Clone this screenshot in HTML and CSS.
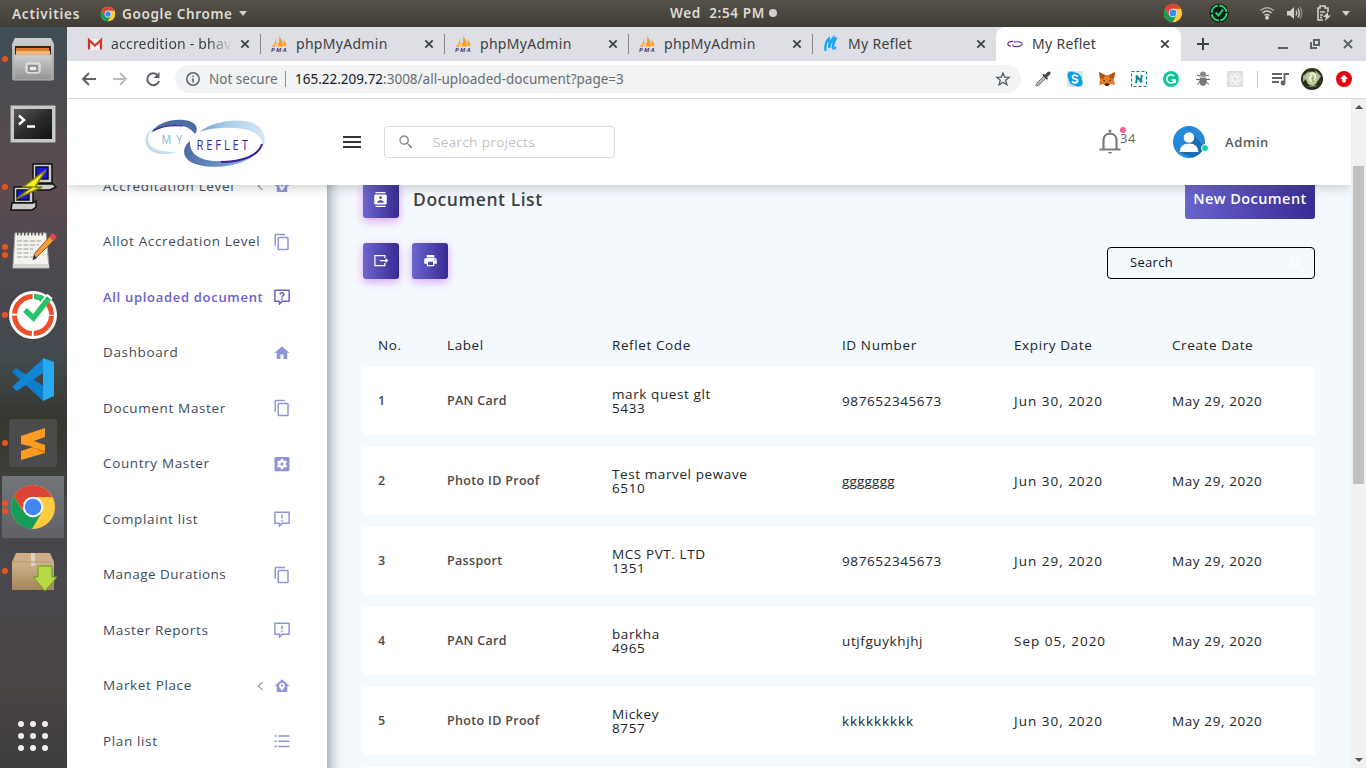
FILE: index.html
```html
<!DOCTYPE html>
<html lang="en">
<head>
<meta charset="utf-8">
<title>My Reflet</title>
<link rel="stylesheet" href="styles.css">
</head>
<body>
<svg class="defs" aria-hidden="true">
  <defs>
    <linearGradient id="lg1" x1="0" y1="0" x2="1" y2="0"><stop offset="0" stop-color="#4c6ba6"/><stop offset=".6" stop-color="#7a9fd0"/><stop offset=".8" stop-color="#8fb2dc"/><stop offset="1" stop-color="#33208f"/></linearGradient>
    <linearGradient id="lg2" x1="0" y1="0" x2="1" y2="0"><stop offset="0" stop-color="#6f9bcd"/><stop offset=".4" stop-color="#a9cbe9"/><stop offset="1" stop-color="#d5e6f5"/></linearGradient>
    <linearGradient id="metal" x1="0" y1="0" x2="0" y2="1"><stop offset="0" stop-color="#cfcfcf"/><stop offset="1" stop-color="#929292"/></linearGradient>
    <linearGradient id="dark" x1="0" y1="0" x2="1" y2="1"><stop offset="0" stop-color="#5a5a5a"/><stop offset=".5" stop-color="#2c2c2c"/><stop offset="1" stop-color="#111"/></linearGradient>
    <linearGradient id="box" x1="0" y1="0" x2="0" y2="1"><stop offset="0" stop-color="#d2b48c"/><stop offset="1" stop-color="#a5855b"/></linearGradient>
  </defs>
  <symbol id="chrome" viewBox="0 0 48 48">
    <circle cx="24" cy="24" r="22" fill="#fdcb3d"/>
    <path d="M24 24 L13 27 L5 13 A22 22 0 0 0 23 46 L33 29Z" fill="#129d58"/>
    <path d="M4.9 13 A22 22 0 0 1 43.5 14 H24 L14 28Z" fill="#dc4437"/>
    <circle cx="24" cy="24" r="10.3" fill="#f4f4f4"/><circle cx="24" cy="24" r="8.2" fill="#4285f4"/>
  </symbol>
  <symbol id="x" viewBox="0 0 10 10"><path d="M1.3 1.3 8.7 8.7M8.7 1.3 1.3 8.7" stroke="currentColor" stroke-width="1.8" fill="none"/></symbol>
  <symbol id="pma" viewBox="0 0 16 16">
    <path d="M1 11 Q4 8 4.500 3 L5.500 11ZM6 10.500 Q9 6 8 0 Q12 5 12 10.500ZM12.500 10 V3 Q15 7 15.500 10Z" fill="#f89c1c"/>
    <path d="M3 11 Q6 7 7 1 V11Z" fill="#fcc98a"/>
    <text x="0" y="16" textLength="15.500" class="pma-t">PMA</text>
  </symbol>
  <symbol id="copy" viewBox="0 0 24 24"><path fill="currentColor" d="M19,21H8V7H19M19,5H8A2,2 0 0,0 6,7V21A2,2 0 0,0 8,23H19A2,2 0 0,0 21,21V7A2,2 0 0,0 19,5M16,1H4A2,2 0 0,0 2,3V17H4V3H16V1Z"/></symbol>
  <symbol id="house" viewBox="0 0 24 24"><path fill="currentColor" d="M10,20V14H14V20H19V12H22L12,3L2,12H5V20H10Z"/></symbol>
  <symbol id="pin" viewBox="0 0 24 24"><path fill="currentColor" fill-rule="evenodd" d="M12,3L2,12H5V20H19V12H22L12,3M12,7.700C14.100,7.700 15.800,9.400 15.800,11.500C15.800,14.500 12,18 12,18C12,18 8.200,14.500 8.200,11.500C8.200,9.400 9.900,7.700 12,7.700M12,10A1.500,1.500 0 0,0 10.500,11.500A1.500,1.500 0 0,0 12,13A1.500,1.500 0 0,0 13.500,11.500A1.500,1.500 0 0,0 12,10Z"/></symbol>
  <symbol id="ask" viewBox="0 0 24 24"><g fill="none" stroke="currentColor" stroke-width="2"><path d="M2.500 3H21.500V17.500H12.500L8.500 21.500V17.500H2.500Z" stroke-linejoin="round"/><path d="M9.500 8.500C9.500 5.500 14.500 5.500 14.500 8.500C14.500 10.300 12 10.200 12 12.500M12 13.700V15.500"/></g></symbol>
  <symbol id="alert" viewBox="0 0 24 24"><g fill="none" stroke="currentColor" stroke-width="2"><path d="M2.500 3H21.500V17.500H12.500L8.500 21.500V17.500H2.500Z" stroke-linejoin="round"/><path d="M12 6V11M12 13V15"/></g></symbol>
  <symbol id="gear" viewBox="0 0 24 24"><rect x="2" y="2.500" width="20" height="19" rx="2" fill="currentColor"/><circle cx="12" cy="12" r="3.700" fill="none" stroke="#fff" stroke-width="3.200"/><path d="M12 5V7.500M12 16.500V19M6 8.500 8 9.700M16 14.300 18 15.500M18 8.500 16 9.700M8 14.300 6 15.500" stroke="#fff" stroke-width="3"/></symbol>
  <symbol id="list" viewBox="0 0 24 24"><path d="M7 5.200H22M7 12.200H22M7 19.200H22M2 5.200H5M2 12.200H5M2 19.200H5" stroke="currentColor" stroke-width="2"/></symbol>
  <symbol id="magnify" viewBox="0 0 24 24"><path fill="currentColor" d="M9.500,3A6.500,6.500 0 0,1 16,9.500C16,11.110 15.410,12.590 14.440,13.730L14.710,14H15.500L20.500,19L19,20.500L14,15.500V14.710L13.730,14.440C12.590,15.410 11.110,16 9.500,16A6.500,6.500 0 0,1 3,9.500A6.500,6.500 0 0,1 9.500,3M9.500,5C7,5 5,7 5,9.500C5,12 7,14 9.500,14C12,14 14,12 14,9.500C14,7 12,5 9.500,5Z"/></symbol>
</svg>

<div class="desktop">
  <div class="topbar">
    <div class="tb-left"><span class="act">Activities</span><svg class="i16"><use href="#chrome"/></svg><span class="app">Google Chrome</span><i class="tri"></i></div>
    <div class="clock"><span>Wed&nbsp; 2:54 PM</span><i class="dot"></i></div>
    <div class="tray">
      <svg width="20" height="20"><use href="#chrome"/></svg>
      <svg class="t2" width="20" height="20" viewBox="0 0 20 20"><circle cx="10" cy="10" r="9.500" fill="#101614"/><circle cx="10" cy="10" r="7.500" fill="none" stroke="#16e06e" stroke-width="2" stroke-dasharray="10.300 1.500"/><path d="M6.500 9.500 9.500 12.500 14 6.500" stroke="#16e06e" stroke-width="2" fill="none"/></svg>
      <svg class="t3" width="14" height="14" viewBox="0 0 14 14" fill="none" stroke="#d3d1cd" stroke-width="1.500"><path d="M.5 4.500Q7-1 13.500 4.500" opacity=".7"/><path d="M2.500 7Q7 3 11.500 7"/><path d="M4.500 9.300Q7 7.500 9.500 9.300"/><circle cx="7" cy="11.800" r="1.200" fill="#d3d1cd"/></svg>
      <svg class="t4" width="16" height="14" viewBox="0 0 16 14" fill="none" stroke="#d3d1cd" stroke-width="1.400"><path d="M0 5H3L7 1V13L3 9.500H0Z" fill="#d3d1cd" stroke="none"/><path d="M9 4.500Q10.500 7 9 9.500M11 2.500Q13.500 7 11 11.500"/><path d="M13 1Q16.500 7 13 13" opacity=".5"/></svg>
      <svg class="t5" width="14" height="16" viewBox="0 0 14 16"><path d="M6 15H1V3H3V1H8V3H11V7M3 7H8M3 10H6M3 12.500H5" fill="none" stroke="#d3d1cd" stroke-width="1.600"/><path d="M11 7 6 12H9L8 16 14 10.500H11Z" fill="#d3d1cd"/></svg>
      <i class="tri"></i>
    </div>
  </div>

  <nav class="dock">
    <div class="app-cell run"><svg viewBox="0 1 48 48"><path d="M6 4H42L45 10V46H3V10Z" fill="url(#metal)"/><rect x="6" y="12" width="36" height="10" fill="#3b2414"/><path d="M7 14H40V17H7Z" fill="#e07b32"/><path d="M7 17H41V22H7Z" fill="#f4b67a"/><rect x="5" y="21" width="38" height="25" fill="url(#metal)" stroke="#b9b9b9"/><rect x="17" y="29" width="14" height="10" rx="2" fill="#c9c9c9" stroke="#eee"/><rect x="20" y="32" width="8" height="5" fill="#eee" stroke="#555"/></svg></div>
    <div class="app-cell"><svg viewBox="0 -.5 48 48"><rect x="1.500" y="6" width="45" height="37" rx="1" fill="#c7c9c7" stroke="#888"/><rect x="5" y="9.500" width="38" height="30" fill="url(#dark)"/><path d="M10 16 15 20.500 10 25M18 27H26" stroke="#fff" stroke-width="2.500" fill="none"/></svg></div>
    <div class="app-cell run"><svg viewBox="0 0 48 48" stroke="#111" stroke-width="1.500"><path d="M24 1H43V20H24Z" fill="#cfcfcf"/><path d="M27 4H39V16H27Z" fill="#1616e8"/><path d="M21 21H44L47 24 41 27H20Z" fill="#ccc"/><path d="M5 24H24V40H5Z" fill="#cfcfcf"/><path d="M8 27H20V37H8Z" fill="#1616e8"/><path d="M3 40H24L27 38V44L23 47H2Z" fill="#ccc"/><path d="M37 7 14 24H23L7 36 33 24H26Z" fill="#f5ef1d" stroke="#7c7a10"/></svg></div>
    <div class="app-cell run2"><svg viewBox="0 1 48 48"><path d="M6 7H37L40 42H4Z" fill="#f3f2ef" stroke="#aaa"/><path d="M4 38H40V42H4Z" fill="#d6d5d2"/><path d="M8 7H36" stroke="#555" stroke-width="5" stroke-dasharray="1.500 2"/><path d="M8 15H32M8 19H30M8 23H24M8 27H22M8 31H27" stroke="#9c9c9c" stroke-dasharray="5 1.500"/><path d="M24 34 26 27 42 9 46 13 30 29Z" fill="#f2a13c" stroke="#94591b"/><path d="M40 11 44 7 48 11 44 15Z" fill="#dc4b4e"/><path d="M24 34 25 29 28 32Z" fill="#333"/></svg></div>
    <div class="app-cell run"><svg viewBox="0 0 48 48"><circle cx="24" cy="24" r="24" fill="#fff"/><circle cx="24" cy="24" r="18.500" fill="none" stroke="#ee4f2b" stroke-width="5" stroke-dasharray="27.060 2" stroke-dashoffset="-1"/><path d="M25 3Q34 3 40 9L34 16 30 9 25 8Z" fill="#27c26c"/><path d="M33 14 41 5" stroke="#fff" stroke-width="7"/><path d="M16 19 24.500 27 40 7" stroke="#27c26c" stroke-width="5.500" fill="none"/></svg></div>
    <div class="app-cell"><svg viewBox="0 0 48 48"><path d="M3 17 7 13 45 38 34 46Z" fill="#0a7fc9"/><path d="M3 32 34 4V18L8 36Z" fill="#1086d4"/><path d="M34 3 45 7V41L34 46Z" fill="#29a9f2"/></svg></div>
    <div class="app-cell run"><svg viewBox="0 0 48 48"><rect width="48" height="48" rx="3" fill="#4b4b4b"/><path d="M12 17 36 9V18L25 22 36 26V34L12 41V32L24 28 12 25Z" fill="#ff9a22"/><path d="M23 28 36 32 35 34Z" fill="#d97706"/></svg></div>
    <div class="app-cell run2 focused"><svg><use href="#chrome"/></svg></div>
    <div class="app-cell run"><svg viewBox="0 -1 48 48"><path d="M7 5H41L45 14H3Z" fill="#cfae87"/><path d="M3 13.500H45V42H3Z" fill="url(#box)"/><path d="M22 5H26V18H22Z" fill="#ddd1c0"/><path d="M3 14H45" stroke="#b69468"/><path d="M29 18H43V29H48L36 43 24 29H29Z" fill="#b5d943" stroke="#6d932a"/></svg></div>
    <div class="grid-btn"><i></i><i></i><i></i><i></i><i></i><i></i><i></i><i></i><i></i></div>
  </nav>

  <div class="browser">
    <div class="tabs">
      <div class="tab"><svg class="i16" viewBox="0 0 16 16"><rect x="1" y="3" width="14" height="11" fill="#f1f1f1"/><path d="M2 13.500V4L8 9.500 14 4V13.500" fill="none" stroke="#d93025" stroke-width="2.200"/></svg><span class="fade">accredition - bhav</span><svg class="x"><use href="#x"/></svg></div>
      <div class="tab"><svg class="i16"><use href="#pma"/></svg><span>phpMyAdmin</span><svg class="x"><use href="#x"/></svg></div>
      <div class="tab"><svg class="i16"><use href="#pma"/></svg><span>phpMyAdmin</span><svg class="x"><use href="#x"/></svg></div>
      <div class="tab"><svg class="i16"><use href="#pma"/></svg><span>phpMyAdmin</span><svg class="x"><use href="#x"/></svg></div>
      <div class="tab last"><svg class="i16" viewBox="0 0 16 16"><path d="M2.500 15C2 10 3 5 6 2.500Q7 7 6 12 8 4 10.500 1.500 11 6 9.500 12 11 5 13.500 1.500M9.500 12Q11 13.500 13 11" fill="none" stroke="#18a8f5" stroke-width="2.300"/></svg><span>My Reflet</span><svg class="x"><use href="#x"/></svg></div>
      <div class="tab active"><svg class="i16" viewBox="0 0 16 16"><path d="M6 5.500Q1 5 .8 8 1 10 4 10M6.500 6Q15 5 15.300 8 14 11 7 10.500 5.500 10 6 8.500" fill="none" stroke="#74309a" stroke-width="1.200"/></svg><span>My Reflet</span><svg class="x"><use href="#x"/></svg></div>
      <svg class="plus" width="12" height="12" viewBox="0 0 12 12"><path d="M6 0V12M0 6H12" stroke="#3c4043" stroke-width="2"/></svg>
      <svg class="win" width="76" height="12" viewBox="0 0 76 12" fill="none" stroke="#5f6368" stroke-width="2"><path d="M0 10H10"/><path d="M36 2H41V7H36Z"/><path d="M33 4V10H39"/><path d="M66 2 74 10M74 2 66 10"/></svg>
    </div>
    <div class="toolbar">
      <svg class="nav" width="80" height="16" viewBox="0 0 80 16" fill="none" stroke="#5f6368" stroke-width="2"><path d="M15 8H2M8 2 2 8 8 14"/><path d="M32 8H45M39 2 45 8 39 14" stroke="#b9bbbe"/><path d="M77 4.500A6 6 0 1 0 78 10"/><path d="M78.500 1V7H72.500Z" fill="#5f6368" stroke="none"/></svg>
      <div class="omni">
        <svg width="14" height="14" viewBox="0 0 14 14" fill="none" stroke="#5f6368" stroke-width="1.500"><circle cx="7" cy="7" r="6.200"/><path d="M7 6.200V10.500M7 3.500V5"/></svg>
        <span class="ns">Not secure</span><i class="bar"></i><span class="url"><b>165.22.209.72</b>:3008/all-uploaded-document?page=3</span>
        <svg class="star" width="14" height="14" viewBox="0 0 14 14"><path d="M7 1 8.700 5.100 13.200 5.400 9.700 8.200 10.900 12.700 7 10.200 3.100 12.700 4.300 8.200 .8 5.400 5.300 5.100Z" fill="none" stroke="#55595e" stroke-width="1.300"/></svg>
      </div>
      <div class="ext">
        <svg viewBox="0 0 16 16"><path d="M1 15 2 12 9 5 11 7 4 14Z" fill="#bbb" stroke="#777"/><path d="M7 3.500 9 3 10 4 12.500 1Q16-.5 15.500 3L12 6 13 7 12 9Z" fill="#444"/></svg>
        <svg viewBox="0 0 16 16"><rect width="16" height="16" fill="#dfe4e8"/><circle cx="8" cy="8" r="6.500" fill="#0b9ee8"/><circle cx="4.500" cy="4.500" r="4" fill="#0b9ee8"/><circle cx="11.500" cy="11.500" r="4" fill="#0b9ee8"/><path d="M11 5.500Q8 3 5.700 5 5 7.500 8 8 11.500 8.500 10.500 10.500 8 13 5 10.500" fill="none" stroke="#fff" stroke-width="1.800"/></svg>
        <svg viewBox="0 0 16 16"><path d="M0 1 6 4H10L16 1 15 9 16 14 11 13 9 15H7L5 13 0 14 1 9Z" fill="#e77d25"/><path d="M0 1 6 4 5 8 1 7ZM16 1 10 4 11 8 15 7Z" fill="#af5416"/><path d="M5 13 8 12 11 13 9 15H7Z" fill="#362b29"/><path d="M4 9 6 10M12 9 10 10" stroke="#333"/></svg>
        <svg viewBox="0 0 16 16"><rect x=".5" y=".5" width="15" height="15" fill="#f4fafa" stroke="#167c8e" stroke-dasharray="3 2"/><path d="M5 12Q6.500 8 5.500 4.500L10.500 11.500Q9.500 8 11 4" fill="none" stroke="#13808e" stroke-width="2"/></svg>
        <svg viewBox="0 0 16 16"><circle cx="8" cy="8" r="8" fill="#15c39a"/><path d="M11 5A4.200 4.200 0 1 0 12 9H8.500M12 9V12" fill="none" stroke="#fff" stroke-width="1.500"/></svg>
        <svg viewBox="0 0 16 16"><path d="M5 5 2 4M11 5 14 4M5 8.500H1M11 8.500H15M5 11 2 13.500M11 11 14 13.500" stroke="#666"/><ellipse cx="8" cy="10" rx="3.800" ry="5" fill="#777"/><circle cx="8" cy="3.500" r="3" fill="#888"/><path d="M4 6.200H12" stroke="#ddd"/></svg>
        <svg viewBox="0 0 16 16"><rect width="16" height="16" fill="#dedede"/><g fill="none" stroke="#f8f8f8"><ellipse cx="8" cy="8" rx="6.500" ry="2.500"/><ellipse cx="8" cy="8" rx="6.500" ry="2.500" transform="rotate(60 8 8)"/><ellipse cx="8" cy="8" rx="6.500" ry="2.500" transform="rotate(120 8 8)"/></g></svg>
      </div>
      <i class="bar lite"></i>
      <svg class="queue" width="17" height="14" viewBox="0 0 17 14"><path d="M0 2H10M0 6H10M0 10H7M12.500 11V2H17" stroke="#5f6368" stroke-width="1.800" fill="none"/><circle cx="11" cy="11" r="2.400" fill="#5f6368"/></svg>
      <svg class="ava" width="22" height="22" viewBox="0 0 22 22"><circle cx="11" cy="11" r="11" fill="#26331c"/><path d="M2 8 8 3 7 9 2 14M14 2 20 8 17 13M6 19 12 17 17 18" fill="#a9b598"/><ellipse cx="11" cy="10.500" rx="6" ry="7" fill="#b7cd98"/><path d="M9 6Q15 4 14 10 12 14 9 12 8 9 11 8" fill="none" stroke="#e9f2d9" stroke-width="2"/><path d="M12 9V14" stroke="#65864b"/></svg>
      <svg class="upd" width="16" height="16" viewBox="0 0 16 16"><circle cx="8" cy="8" r="8" fill="#e60012"/><path d="M8 3.500 12 8H9.700V11.500H6.300V8H4Z" fill="#fff"/></svg>
    </div>

    <div class="viewport">
      <div class="page">
        <header class="header">
          <svg class="logo" width="120" height="48" viewBox="0 0 120 48">
            <path d="M8 8C-4 15-2 34 18 34Q28 34 31 32 10 32 5 25 0 17 8 8Z" fill="#c3ddf1"/>
            <path d="M6 13C14-2 46-4 51 6Q53 10 50 14 44 5 29 5 14 6 6 13Z" fill="#4d6ca6"/>
            <path d="M8 11Q20 4 38 6" stroke="#35219a" stroke-width="1.200" fill="none"/>
            <path d="M55 12C70-1 106-4 116 9 121 16 120 22 118 28 118 14 106 9 90 8Q68 7 55 12Z" fill="url(#lg2)"/>
            <path d="M45 21C36 28 36 41 54 45 78 51 114 42 118 22 113 35 100 40 80 41 60 42 44 37 45 21Z" fill="url(#lg1)"/>
            <path d="M76 42C98 42 114 35 117 24" stroke="#35219a" stroke-width="2" fill="none"/>
            <text x="20.600" y="24" textLength="26" transform="scale(.8 1)" class="logo-my">MY</text>
            <text x="64.500" y="30" textLength="64" transform="scale(.8 1)" class="logo-re">REFLET</text>
          </svg>
          <div class="burger"><i></i><i></i><i></i></div>
          <div class="hsearch"><svg width="18" height="18"><use href="#magnify"/></svg><span>Search projects</span></div>
          <div class="bell"><svg width="22" height="26" viewBox="0 0 22 26"><path d="M4.500 21V12C4.500 3.500 17.500 3.500 17.500 12V21" fill="none" stroke="#7b7b7b" stroke-width="2.200"/><path d="M.5 21.500H21.500" stroke="#7b7b7b" stroke-width="2"/><path d="M8.500 24H13.500L12 25.500H10Z" fill="#7b7b7b"/><circle cx="11" cy="3" r="1.500" fill="#7b7b7b"/></svg><span>34</span><i></i></div>
          <div class="user"><svg width="32" height="32" viewBox="0 0 32 32"><circle cx="16" cy="16" r="16" fill="#2489d7"/><path d="M20 8 31 20Q29 28 20 31.500L7 26Z" fill="#1c6bb0"/><circle cx="16" cy="11.500" r="5.300" fill="#fff"/><path d="M6.500 26Q7 17.500 16 17.500 25 17.500 25.500 26Z" fill="#fff"/></svg><i></i></div>
          <span class="admin">Admin</span>
        </header>
        <div class="body">
          <aside class="side">
            <div class="item"><span>Accreditation Level</span><i class="chev"></i><svg><use href="#pin"/></svg></div>
            <div class="item"><span>Allot Accredation Level</span><svg><use href="#copy"/></svg></div>
            <div class="item on"><span>All uploaded document</span><svg><use href="#ask"/></svg></div>
            <div class="item"><span>Dashboard</span><svg><use href="#house"/></svg></div>
            <div class="item"><span>Document Master</span><svg><use href="#copy"/></svg></div>
            <div class="item"><span>Country Master</span><svg><use href="#gear"/></svg></div>
            <div class="item"><span>Complaint list</span><svg><use href="#alert"/></svg></div>
            <div class="item tight"><span>Manage Durations</span><svg><use href="#copy"/></svg></div>
            <div class="item"><span>Master Reports</span><svg><use href="#alert"/></svg></div>
            <div class="item"><span>Market Place</span><i class="chev"></i><svg><use href="#pin"/></svg></div>
            <div class="item"><span>Plan list</span><svg><use href="#list"/></svg></div>
          </aside>
          <main class="main">
            <div class="head">
              <div class="sq"><svg viewBox="0 0 24 24"><path fill="#fff" fill-rule="evenodd" d="M20,0H4V2H20V0M4,24H20V22H4V24M20,4H4A2,2 0 0,0 2,6V18A2,2 0 0,0 4,20H20A2,2 0 0,0 22,18V6A2,2 0 0,0 20,4M12,6.750A2.250,2.250 0 0,1 14.250,9A2.250,2.250 0 0,1 12,11.250A2.250,2.250 0 0,1 9.750,9A2.250,2.250 0 0,1 12,6.750M17,17H7V15.500C7,13.830 10.330,13 12,13C13.670,13 17,13.830 17,15.500V17Z"/></svg></div>
              <h1>Document List</h1>
              <button class="new">New Document</button>
            </div>
            <div class="tools">
              <div class="sq"><svg viewBox="0 0 24 24"><path fill="none" stroke="#fff" stroke-width="2" d="M19 8V4H3V20H19V16M11 12H23M20 9 23 12 20 15"/></svg></div>
              <div class="sq pr"><svg viewBox="0 0 24 24"><path fill="#fff" fill-rule="evenodd" d="M18,3H6V7H18M19,12A1,1 0 0,1 18,11A1,1 0 0,1 19,10A1,1 0 0,1 20,11A1,1 0 0,1 19,12M16,19H8V14H16M19,8H5A3,3 0 0,0 2,11V17H6V21H18V17H22V11A3,3 0 0,0 19,8Z"/></svg></div>
              <div class="search"><span>Search</span><svg width="15" height="15"><use href="#magnify"/></svg></div>
            </div>
            <div class="row th"><span>No.</span><span>Label</span><span>Reflet Code</span><span>ID Number</span><span>Expiry Date</span><span>Create Date</span></div>
            <div class="row"><b>1</b><b>PAN Card</b><span class="code">mark quest glt<br>5433</span><span>987652345673</span><span class="exp">Jun 30, 2020</span><span>May 29, 2020</span></div>
            <div class="row"><b>2</b><b>Photo ID Proof</b><span class="code">Test marvel pewave<br>6510</span><span class="ggg">ggggggg</span><span class="exp">Jun 30, 2020</span><span>May 29, 2020</span></div>
            <div class="row"><b>3</b><b>Passport</b><span class="code">MCS PVT. LTD<br>1351</span><span>987652345673</span><span class="exp">Jun 29, 2020</span><span>May 29, 2020</span></div>
            <div class="row"><b>4</b><b>PAN Card</b><span class="code">barkha<br>4965</span><span>utjfguykhjhj</span><span class="exp">Sep 05, 2020</span><span>May 29, 2020</span></div>
            <div class="row"><b>5</b><b>Photo ID Proof</b><span class="code">Mickey<br>8757</span><span class="kkk">kkkkkkkkk</span><span class="exp">Jun 30, 2020</span><span>May 29, 2020</span></div>
            <div class="row"></div>
          </main>
        </div>
      </div>
      <div class="scroll"><i class="up"></i><div class="thumb"></div><i class="down"></i></div>
    </div>
  </div>
</div>
</body>
</html>
```
FILE: styles.css
```css
* { box-sizing: border-box; }
body { margin: 0; width: 1366px; height: 768px; overflow: hidden; font-family: "Open Sans", "Noto Sans", sans-serif; }
svg { display: block; flex: none; overflow: visible; }
.defs { position: absolute; width: 0; height: 0; }
.i16 { width: 16px; height: 16px; }
.desktop { display: grid; grid-template: 27px 741px / 67px 1299px; }

.topbar { grid-column: 1 / 3; display: grid; grid-template-columns: 670px 1fr auto; align-items: center; background: linear-gradient(#56524a, #403d38); color: #dfdbd2; font: 600 13.500px/26px "Noto Sans", sans-serif; letter-spacing: .65px; }
.tb-left { display: flex; align-items: center; padding-left: 12px; }
.act { width: 88px; white-space: nowrap; letter-spacing: .8px; }
.app { margin: 0 6px 0 6px; }
.tri { border: 4.500px solid transparent; border-top: 5px solid #d3d1cd; border-bottom: 0; }
.clock { display: flex; align-items: center; gap: 4px; margin-top: -1px; }
.dot { width: 8px; height: 8px; border-radius: 50%; background: #d3d1cd; }
.tray { display: flex; align-items: center; padding-right: 16px; margin-top: -1px; }
.t2 { margin-left: 26px; } .t3 { margin-left: 31px; } .t4 { margin-left: 13px; } .t5 { margin: 0 11px 0 14px; }

.dock { display: flex; flex-direction: column; align-items: flex-end; background: linear-gradient(#3f4d55 0, #4e4c50 10%, #5b4a51 22%, #4a4950 34%, #424a4e 45%, #36372f 53%, #393a33 57%, #45474a 66%, #48484d 75%, #4b4444 88%, #3e3e3d 100%); }
.app-cell { width: 67px; height: 64px; display: grid; place-items: center; position: relative; flex: none; padding-right: 1px; }
.app-cell svg { width: 48px; height: 48px; }
.focused { background: linear-gradient(#72767a, #606166) no-repeat 2px 1px / 62px 62px; }
.run::before, .run2::before { content: ""; position: absolute; left: 2px; top: 29px; width: 6px; height: 6px; border-radius: 50%; background: #e95420; }
.run2::before { top: 25px; box-shadow: 0 8px #e95420; }
.grid-btn { display: grid; grid-template-columns: repeat(3, 6px); gap: 6px; width: 30px; margin: 118px 19px 0 0; }
.grid-btn i { height: 6px; border-radius: 50%; background: #eee; }

.browser { display: flex; flex-direction: column; background: #fff; }
.tabs { height: 34px; display: flex; align-items: center; padding-left: 10px; background: #dedfe5; flex: none; }
.tab { width: 184px; height: 34px; display: flex; align-items: center; padding: 0 10px; background: linear-gradient(#85878c, #85878c) no-repeat right 7px / 1px 20px; color: #3c4043; }
.tab.last { background: none; }
.tab span { margin-left: 9px; width: 121px; font: 14px/20px "Noto Sans", sans-serif; letter-spacing: .3px; white-space: nowrap; overflow: hidden; }
.tab .fade { margin-left: 8px; width: 122px; letter-spacing: .2px; -webkit-mask-image: linear-gradient(90deg, #000 80%, transparent 99%); mask-image: linear-gradient(90deg, #000 80%, transparent 99%); }
.tab .x { width: 10px; height: 10px; margin-left: 7px; }
.tab.active { width: 185px; margin-left: -1px; padding-left: 11px; background: #fff; border-radius: 9px 9px 0 0; }
.plus { margin-left: 16px; }
.win { margin-left: 69px; }

.toolbar { height: 38px; display: flex; align-items: center; padding-bottom: 1px; border-bottom: 1px solid #d8d8de; flex: none; }
.nav { margin-left: 14px; }
.omni { width: 846px; height: 28px; margin-left: 14px; border-radius: 14px; background: #f1f3f4; display: flex; align-items: center; padding: 0 11px; font: 13.500px/20px "Noto Sans", sans-serif; color: #6a6e73; }
.ns { margin-left: 9px; width: 69px; white-space: nowrap; }
.bar { width: 1px; height: 16px; background: #8b8e92; margin: 0 9px 0 7px; }
.url b { font-weight: 400; color: #202124; }
.star { margin-left: auto; }
.ext { display: flex; gap: 16px; margin-left: 14px; }
.ext svg { width: 16px; height: 16px; }
.bar.lite { background: #c9cacd; margin: 0 0 0 14px; }
.queue { margin-left: 14px; }
.ava { margin-left: 12px; }
.upd { margin-left: 13px; }

.viewport { display: flex; height: 669px; }
.page { width: 1284px; overflow: hidden; background: #f4f9fe; }
.scroll { width: 15px; background: #f1f1f1; display: flex; flex-direction: column; align-items: center; }
.up, .down { border: 4px solid transparent; flex: none; }
.up { border-top: 0; border-bottom: 4px solid #505050; margin-top: 6px; }
.thumb { width: 11px; height: 318px; background: #c1c1c1; margin-top: 57px; }
.down { border-bottom: 0; border-top: 4px solid #505050; margin-top: auto; margin-bottom: 6px; }

.header { position: relative; z-index: 3; height: 86px; display: flex; align-items: center; background: #fff; box-shadow: 0 1px 12px rgba(60, 70, 70, .32); }
.logo { margin: 3px 0 0 78px; }
.burger { margin-left: 78px; width: 18px; display: grid; gap: 3px; }
.burger i { height: 2px; background: #333; }
.hsearch { margin-left: 23px; width: 231px; height: 32px; border: 1px solid #d8d9dd; border-radius: 4px; display: flex; align-items: center; padding-left: 12px; color: #8d8d8d; }
.hsearch span { margin-left: 18px; font-size: 13.500px; font-weight: 300; letter-spacing: .55px; color: #a0a3a8; }
.bell { position: relative; display: flex; margin: -2px 0 0 484px; width: 73px; color: #666; }
.bell span { font: 13px/20px "Open Sans", sans-serif; letter-spacing: .5px; margin-left: -1px; }
.bell i { position: absolute; left: 21px; top: -1px; width: 6px; height: 6px; border-radius: 50%; background: #fe5c96; }
.user { position: relative; margin-left: 1px; }
.user i { position: absolute; left: 28px; top: 18px; width: 8px; height: 8px; border-radius: 50%; background: #0ccfaa; border: 1px solid #fff; }
.admin { margin-left: 20px; font-size: 13px; font-weight: 600; letter-spacing: .6px; color: #5a5a5a; }

.body { display: flex; margin-top: -27px; }
.side { position: relative; z-index: 1; width: 260px; height: 640px; background: #fff; box-shadow: 2px 0 13px rgba(50, 60, 70, .55); }
.item { height: 55.500px; display: flex; align-items: center; padding: 0 36px; color: #3e4b5b; font-size: 13.500px; letter-spacing: .64px; white-space: nowrap; }
.item.tight { letter-spacing: .45px; }
.item svg { width: 18px; height: 18px; margin-left: auto; color: #8e94d4; }
.item.on { color: #6a61cd; font-size: 13px; font-weight: 600; letter-spacing: .7px; }
.item.on svg { color: #6a61cd; }
.item svg, .item i { position: relative; top: .5px; }
.chev { width: 6px; height: 6px; border-left: 1.500px solid #888; border-bottom: 1.500px solid #888; transform: rotate(45deg); margin-left: auto; margin-right: 8px; }
.item .chev + svg { margin-left: 0; }

.main { padding: 24px 36px 0; width: 1024px; }
.head, .tools { display: flex; align-items: center; }
.head { height: 36px; }
.sq { width: 36px; height: 36px; border-radius: 3px; background: linear-gradient(90deg, #6a67ce, #392993); box-shadow: 0 3px 8px rgba(195, 60, 245, .45); display: grid; place-items: center; padding: 0 1px 1px 0; }
.sq.pr { padding-right: 0; }
.sq svg { width: 15px; height: 15px; }
h1 { margin: -2px 0 0 14px; font-size: 17.500px; line-height: 20px; font-weight: 600; letter-spacing: .55px; color: #3d4348; }
.new { margin-left: auto; width: 130px; height: 38px; padding: 0 0 3px; border: 0; border-radius: 3px; background: linear-gradient(100deg, #6a67ce, #392993); color: #fff; font: 600 14.500px "Open Sans", sans-serif; letter-spacing: .42px; }
.tools { margin-top: 25px; gap: 13px; height: 36px; }
.search { margin: 4px 0 0 auto; width: 208px; height: 32px; border: 1px solid #000; border-radius: 4px; display: flex; align-items: center; justify-content: space-between; padding: 0 10px 2px 22px; font-size: 13px; color: #111; letter-spacing: .3px; }
.search svg { color: #fff; margin-top: 4px; }
.row { display: grid; grid-template-columns: 69px 165px 230px 172px 158px 1fr; align-items: center; height: 68px; margin-bottom: 12px; padding-left: 15px; background: #fff; color: #212529; font-size: 13.500px; letter-spacing: .6px; white-space: nowrap; line-height: 14px; }
.row b { font-weight: 600; font-size: 12.500px; color: #4a4a4a; letter-spacing: .32px; margin-top: -1px; }
.row .code { margin-top: -1px; }
.row .ggg { letter-spacing: .2px; }
.row .kkk { letter-spacing: .9px; }
.row .exp { letter-spacing: 1px; }
.row.th { background: none; height: 44px; margin: 44px 0 0; }
.pma-t { font: italic 700 6px "Open Sans", sans-serif; fill: #4a3a78; }
.logo-my { font: 400 13.500px "Open Sans", sans-serif; fill: #7db9e0; }
.logo-re { font: 400 14px "Open Sans", sans-serif; fill: #3e2a94; }
```
